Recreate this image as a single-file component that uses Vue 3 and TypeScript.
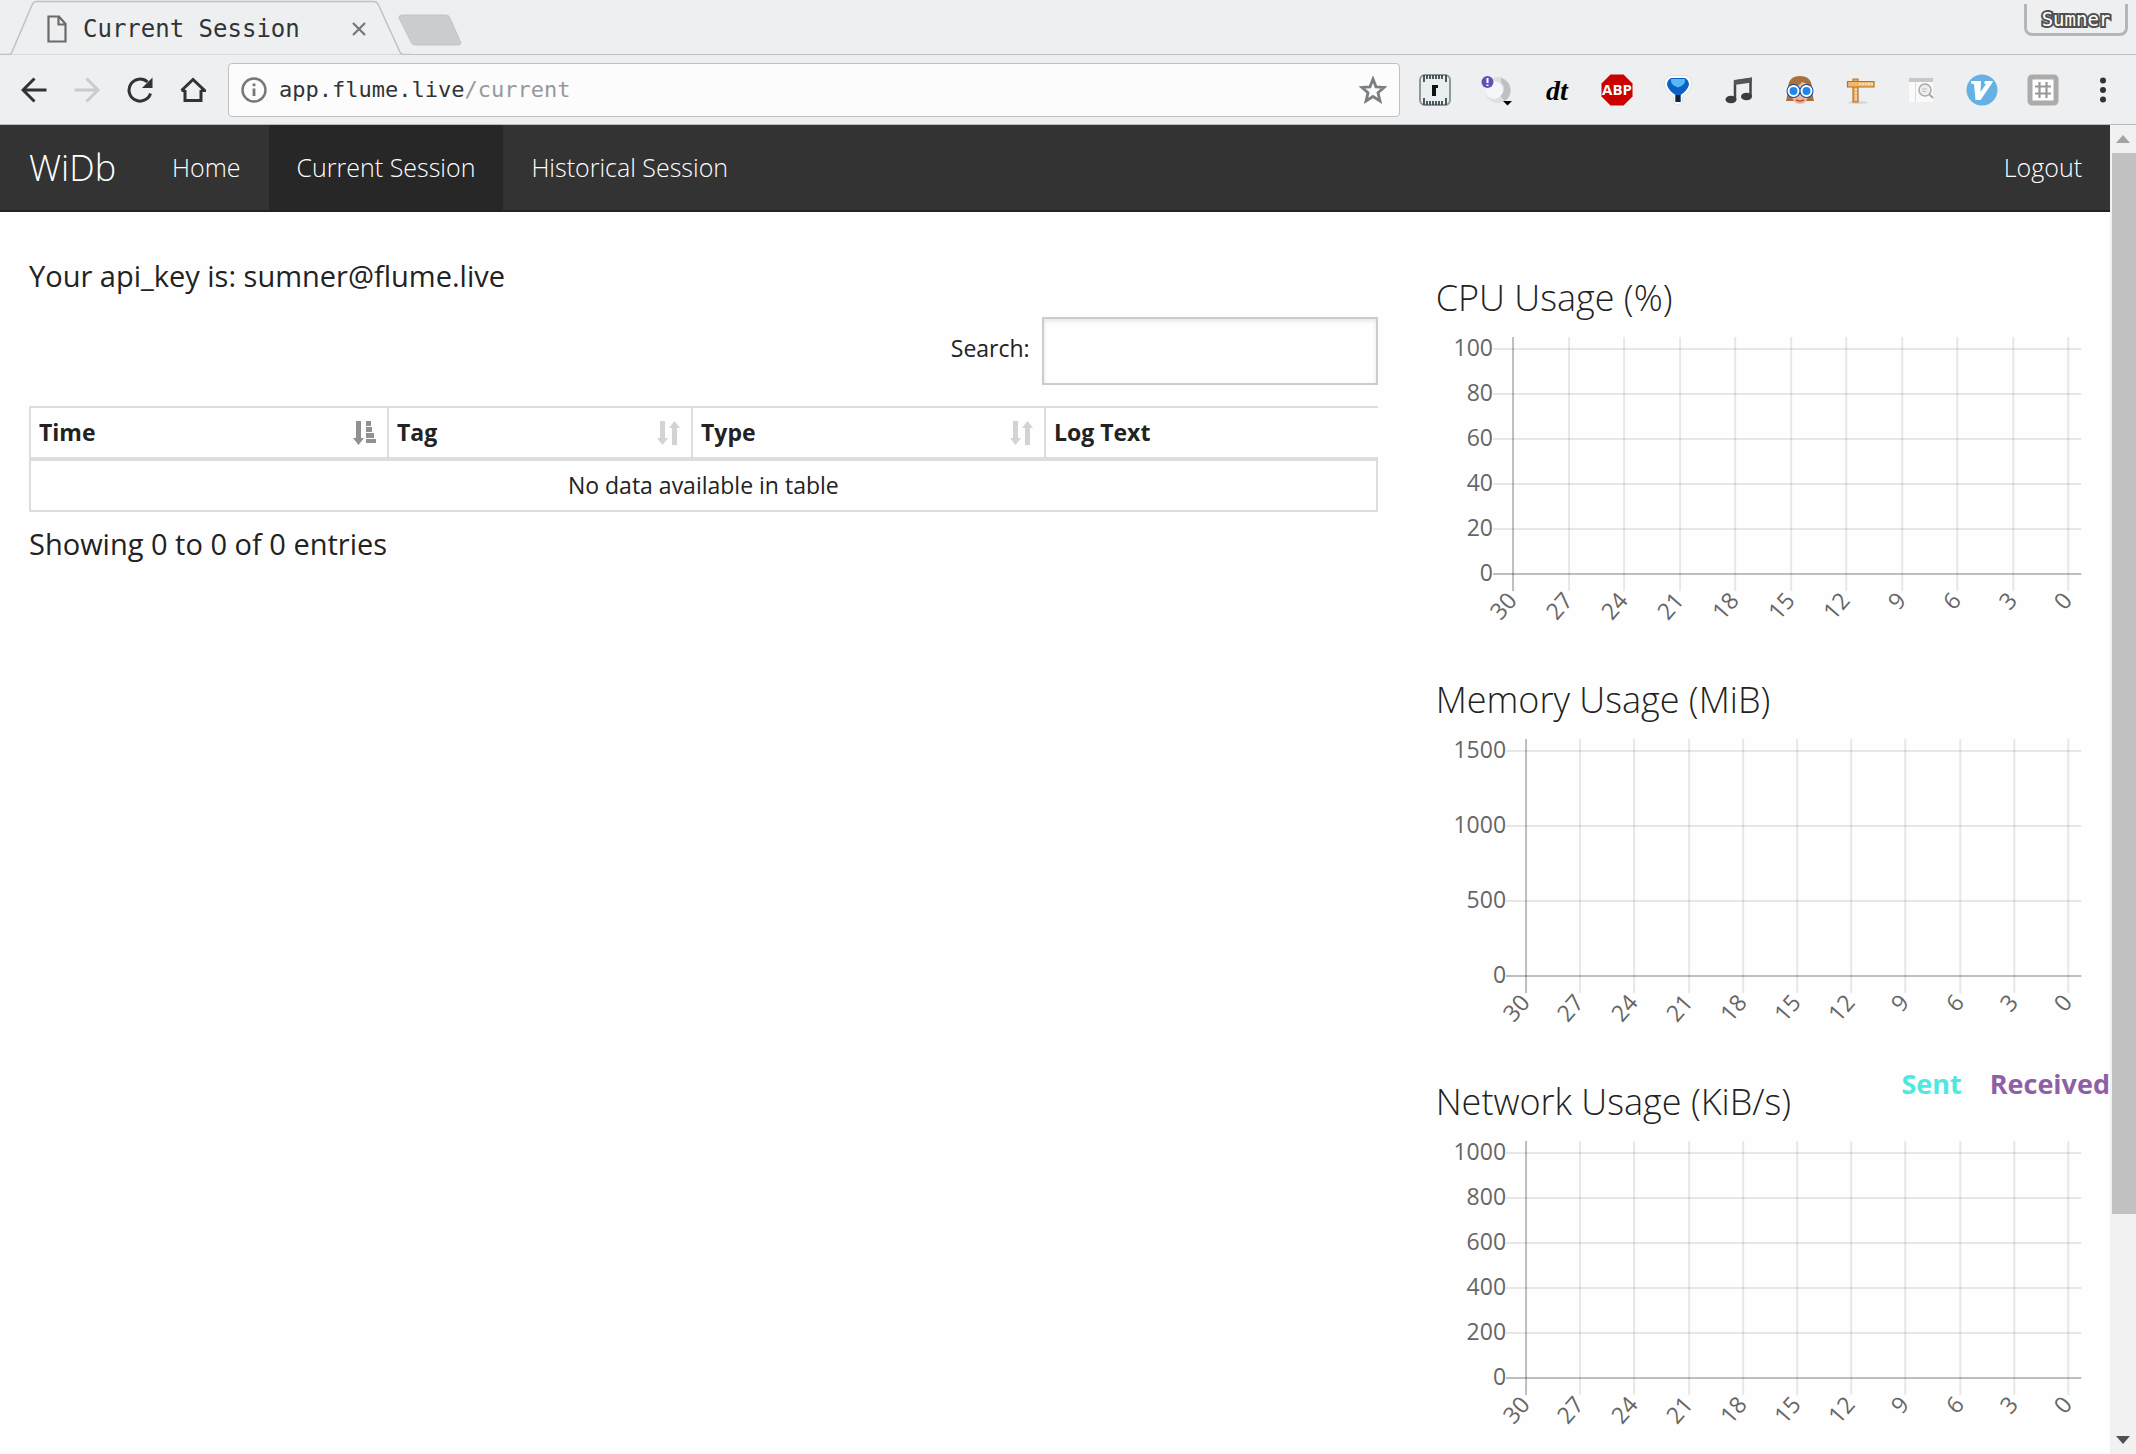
<script setup lang="ts">
interface Tick {
  label: string
  at: number
}

interface Chart {
  title: string
  axis: number
  rows: Tick[]
  cols: Tick[]
  legend: { label: string; tone: string }[]
}

const seconds = [30, 27, 24, 21, 18, 15, 12, 9, 6, 3, 0]

// Places the labels evenly between two ends, on whole units.
const spread = (labels: (string | number)[], from: number, to: number): Tick[] =>
  labels.map((label, i) => ({
    label: String(label),
    at: Math.round(from + ((to - from) * i) / (labels.length - 1)),
  }))

const makeChart = (
  title: string,
  values: number[],
  axis: number,
  legend: Chart['legend'] = [],
): Chart => ({
  title,
  axis,
  rows: spread(values, 12, 237),
  cols: spread(seconds, axis, 632),
  legend,
})

const charts: Chart[] = [
  makeChart('CPU Usage (%)', [100, 80, 60, 40, 20, 0], 77),
  makeChart('Memory Usage (MiB)', [1500, 1000, 500, 0], 90),
  makeChart('Network Usage (KiB/s)', [1000, 800, 600, 400, 200, 0], 90, [
    { label: 'Sent', tone: 'sent' },
    { label: 'Received', tone: 'received' },
  ]),
]

const columns = [
  { label: 'Time', name: 'time', sort: 'asc' },
  { label: 'Tag', name: 'tag', sort: 'both' },
  { label: 'Type', name: 'type', sort: 'both' },
  { label: 'Log Text', name: 'log', sort: 'none' },
]
</script>

<template>
  <div class="window">
    <header class="chrome">
      <div class="tabs">
        <div class="tab">
          <svg class="tab-shape" width="413" height="55" viewBox="0 0 413 55" aria-hidden="true">
            <path d="M0 54.500H9Q11 54.500 12 52L32 5Q33.500 1.500 37 1.500H374Q377 1.500 378.500 5L400 52Q401 54.500 403 54.500H413" fill="#eeeff1" stroke="#bfc1c3" stroke-width="1.500" />
          </svg>
          <svg class="tab-icon" width="20" height="28" viewBox="0 0 20 28" aria-hidden="true">
            <path d="M1.500 1.500H12L18.500 9V26.500H1.500Z M11.500 2V9.500H18.500" fill="none" stroke="#6b6b6b" stroke-width="2.200" />
          </svg>
          <span class="tab-title">Current Session</span>
          <button class="tab-close" type="button" aria-label="Close tab">
            <svg width="14" height="14" viewBox="0 0 14 14"><path d="M1 1L13 13M13 1L1 13" stroke="#75777a" stroke-width="2.200" /></svg>
          </button>
        </div>
        <button class="new-tab" type="button" aria-label="New tab">
          <svg width="64" height="32" viewBox="0 0 64 32"><path d="M4 1H48Q51 1 52 4L63 29Q63 31 60 31H17Q14 31 13 28L1 4Q1 1 4 1Z" fill="#cbcccd" stroke="#c4c5c6" /></svg>
        </button>
        <button class="profile" type="button">Sumner</button>
      </div>

      <div class="toolbar">
        <nav class="controls" aria-label="Browser controls">
          <button type="button" aria-label="Back">
            <svg width="26" height="26" viewBox="0 0 26 26"><path d="M25.500 13H2.500M13.500 1.500L2 13L13.500 24.500" fill="none" stroke="#2f3437" stroke-width="3" /></svg>
          </button>
          <button type="button" aria-label="Forward" disabled>
            <svg width="26" height="26" viewBox="0 0 26 26"><path d="M0.500 13H23.500M12.500 1.500L24 13L12.500 24.500" fill="none" stroke="#cacbcd" stroke-width="3" /></svg>
          </button>
          <button type="button" aria-label="Reload">
            <svg width="26" height="26" viewBox="0 0 26 26"><path d="M23.500 16.500A11 11 0 1 1 20.500 5" fill="none" stroke="#2f3437" stroke-width="3" /><path d="M25.500 0.500V11H15Z" fill="#2f3437" /></svg>
          </button>
          <button type="button" aria-label="Home page">
            <svg width="26" height="26" viewBox="0 0 26 26"><path d="M5 13V23.500H21V13M1.500 13.500L13 2.500L24.500 13.500H21M5 13.500H1.500" fill="none" stroke="#2f3437" stroke-width="3" /></svg>
          </button>
        </nav>

        <div class="omnibox">
          <svg width="26" height="26" viewBox="0 0 26 26" aria-hidden="true">
            <circle cx="13" cy="13" r="11.500" fill="none" stroke="#75787b" stroke-width="2.400" />
            <path d="M13 11.500V19M13 6.500V9.300" stroke="#75787b" stroke-width="2.800" />
          </svg>
          <span class="url">app.flume.live<span class="path">/current</span></span>
          <svg class="star" width="28" height="28" viewBox="0 0 28 28" role="img" aria-label="Bookmark this page">
            <path d="M14 3L17 10.800L25.200 11.400L19 16.800L21 25L14 20.500L7 25L9 16.800L2.800 11.400L11 10.800Z" fill="none" stroke="#7b7e80" stroke-width="2.800" />
          </svg>
        </div>

        <div class="extensions">
          <svg width="32" height="32" viewBox="0 0 32 32" aria-hidden="true">
            <rect x="1" y="1" width="30" height="30" rx="5" fill="#e9eff1" stroke="#8e979b" stroke-width="2" />
            <path d="M5 1V8M8 1V5M11 1V5M14 1V5M17 1V5M20 1V5M23 1V5M27 1V8M5 31V24M8 31V27M11 31V27M14 31V27M17 31V27M20 31V27M23 31V27M27 31V24" stroke="#333e44" stroke-width="1.700" />
            <path d="M13 11H19V14H17V22H13Z" fill="#111" />
          </svg>
          <svg width="32" height="32" viewBox="0 0 32 32" aria-hidden="true">
            <circle cx="18" cy="16" r="13" fill="#dedfe1" />
            <path d="M21 4A13 13 0 0 1 25 27L20 22A9 9 0 0 0 21 8Z" fill="#bfc0c3" />
            <circle cx="14" cy="16" r="9" fill="#f6f6f8" />
            <circle cx="7.500" cy="8" r="6" fill="#5d55b5" />
            <path d="M7.500 4V9M7.500 10.500V12" stroke="#fff" stroke-width="2" />
            <path d="M23 27H32L27.500 31.500Z" fill="#000" />
          </svg>
          <svg width="32" height="32" viewBox="0 0 32 32" aria-hidden="true">
            <text class="dt" x="16" y="26" text-anchor="middle">dt</text>
          </svg>
          <svg width="32" height="32" viewBox="0 0 32 32" aria-hidden="true">
            <path d="M9.500 0.500H22.500L31.500 9.500V22.500L22.500 31.500H9.500L0.500 22.500V9.500Z" fill="#cb0000" />
            <text class="abp" x="16" y="21" text-anchor="middle">ABP</text>
          </svg>
          <svg width="32" height="32" viewBox="0 0 32 32" aria-hidden="true">
            <path d="M8 1.500H24Q30 4 30 11Q28 18 20.500 23V28Q19.500 31 16 31Q12 31 11.500 28V23Q4 18 2 11Q2 4 8 1.500Z" fill="#fdfdfd" stroke="#dfe0e2" />
            <path d="M9 4H23Q27 6 27 11Q25 17 18.500 21V28H13.500V21Q7 17 5 11Q5 6 9 4Z" fill="#0b62c4" />
            <path d="M9 5H23Q24 11 16 13.500Q8 11 9 5Z" fill="#58b8f5" />
            <path d="M13.500 21H18.500V28H13.500Z" fill="#12233c" />
          </svg>
          <svg width="32" height="32" viewBox="0 0 32 32" aria-hidden="true">
            <path d="M12 25V7.500L27.500 5V22" fill="none" stroke="#444" stroke-width="2.500" />
            <path d="M11 6L29 3.500V8.500L11 11Z" fill="#555" />
            <ellipse cx="8" cy="25.500" rx="5.500" ry="3.800" fill="#3c3c3c" />
            <ellipse cx="23.500" cy="22.500" rx="5.500" ry="3.800" fill="#3c3c3c" />
          </svg>
          <svg width="32" height="32" viewBox="0 0 32 32" aria-hidden="true">
            <path d="M2 27Q4 20 4 13Q5 2 16 2Q27 2 28 13Q28 20 30 27L22 27H10Z" fill="#a8703f" />
            <path d="M7 14Q14 13 18 8Q24 9 25 14V20Q23 30 16 30Q9 30 7 20Z" fill="#eeb694" />
            <circle cx="9.500" cy="17" r="7" fill="#0c479f" />
            <circle cx="22.500" cy="17" r="7" fill="#0c479f" />
            <circle cx="9.500" cy="17" r="5" fill="#1f86ef" stroke="#fff" stroke-width="2" />
            <circle cx="22.500" cy="17" r="5" fill="#1f86ef" stroke="#fff" stroke-width="2" />
            <path d="M12 26Q16 28 20 26" fill="none" stroke="#b8504a" stroke-width="1.500" />
          </svg>
          <svg width="32" height="32" viewBox="0 0 32 32" aria-hidden="true">
            <ellipse cx="13" cy="28.500" rx="10" ry="1.500" fill="#d4d5d7" />
            <path d="M8 5H13V28H8Z" fill="#edb066" stroke="#b8712c" stroke-width="1.200" />
            <path d="M2.500 7.500H29V13H2.500Z" fill="#f0b970" stroke="#b8712c" stroke-width="1.200" />
            <path d="M15 9V11M18 9V11M21 9V11M24 9V11M27 9V11M10 16H12M10 19H12M10 22H12M10 25H12" stroke="#fff" />
          </svg>
          <svg width="32" height="32" viewBox="0 0 32 32" aria-hidden="true">
            <rect x="4" y="4" width="24" height="24" fill="#fafafa" />
            <rect x="4" y="4" width="24" height="4" fill="#c8c8c8" />
            <path d="M10.500 8V28" stroke="#ddd" />
            <circle cx="20" cy="16" r="6" fill="#eee" stroke="#aaa" stroke-width="1.500" />
            <path d="M24 20L28 24" stroke="#aaa" stroke-width="2" />
            <path d="M17 15H22M17 17.500H21" stroke="#bbb" />
          </svg>
          <svg width="32" height="32" viewBox="0 0 32 32" aria-hidden="true">
            <circle cx="16" cy="16" r="15.500" fill="#66b1e4" />
            <path d="M5 7H15L14.500 18L20 10L18 9.500L19 7H27L25.500 10L14.500 26H9.500L8 10L5 9.500Z" fill="#fff" />
          </svg>
          <svg width="32" height="32" viewBox="0 0 32 32" aria-hidden="true">
            <rect x="3" y="3" width="26" height="26" rx="2" fill="#fff" stroke="#ababab" stroke-width="5" />
            <path d="M12.500 8V24M19.500 8V24M8 12.500H24M8 19.500H24" stroke="#999" stroke-width="2.200" />
          </svg>
        </div>

        <button class="menu" type="button" aria-label="Browser menu">
          <svg width="8" height="26" viewBox="0 0 8 26"><g fill="#2f3437"><circle cx="4" cy="3.500" r="3" /><circle cx="4" cy="13" r="3" /><circle cx="4" cy="22.500" r="3" /></g></svg>
        </button>
      </div>
    </header>

    <div class="viewport">
      <div class="page">
        <nav class="navbar">
          <a class="brand" href="#">WiDb</a>
          <a class="link" href="#">Home</a>
          <a class="link active" href="#" aria-current="page">Current Session</a>
          <a class="link" href="#">Historical Session</a>
          <a class="link logout" href="#">Logout</a>
        </nav>

        <main class="columns">
          <section class="logs">
            <p class="api-key">Your api_key is: sumner@flume.live</p>
            <div class="filter">
              <label for="log-search">Search:</label>
              <input id="log-search" type="search" />
            </div>
            <table>
              <thead>
                <tr>
                  <th v-for="c in columns" :key="c.name" scope="col" :class="c.name">
                    <span class="head">
                      {{ c.label }}
                      <svg v-if="c.sort === 'asc'" width="24" height="24" viewBox="0 0 24 24" aria-hidden="true">
                        <path d="M3 0H8V17H11L5.500 24L0 17H3ZM13 0H18V5H13ZM13 6H19V11H13ZM13 12H21V17H13ZM13 18H23V22H13Z" fill="#919191" />
                      </svg>
                      <svg v-else-if="c.sort === 'both'" width="24" height="24" viewBox="0 0 24 24" aria-hidden="true">
                        <path d="M3 0H8V17H11L5.500 24L0 17H3ZM15 24H20V7H23L17.500 0L12 7H15Z" fill="#d3d3d3" />
                      </svg>
                    </span>
                  </th>
                </tr>
              </thead>
              <tbody>
                <tr>
                  <td colspan="4">No data available in table</td>
                </tr>
              </tbody>
            </table>
            <p class="info">Showing 0 to 0 of 0 entries</p>
          </section>

          <aside class="charts">
            <section v-for="chart in charts" :key="chart.title" class="chart">
              <h2>{{ chart.title }}</h2>
              <div v-if="chart.legend.length" class="legend">
                <span v-for="l in chart.legend" :key="l.label" :class="l.tone">{{ l.label }}</span>
              </div>
              <svg class="plot" viewBox="0 0 645 294" role="img" :aria-label="chart.title">
                <g class="grid">
                  <line v-for="(r, i) in chart.rows" :key="'r' + r.label" :class="{ zero: i === chart.rows.length - 1 }" :x1="chart.axis - 20" x2="645" :y1="r.at" :y2="r.at" />
                  <line v-for="(c, i) in chart.cols" :key="'c' + c.label" :class="{ zero: i === 0 }" :x1="c.at" :x2="c.at" y1="0" y2="254" />
                </g>
                <text v-for="r in chart.rows" :key="'rt' + r.label" :x="chart.axis - 20" :y="r.at + 7" text-anchor="end">{{ r.label }}</text>
                <text v-for="c in chart.cols" :key="'ct' + c.label" :transform="`translate(${c.at - 1} 259) rotate(-49)`" y="8" text-anchor="end">{{ c.label }}</text>
              </svg>
            </section>
          </aside>
        </main>
      </div>

      <div class="scrollbar" aria-hidden="true">
        <svg width="14" height="8" viewBox="0 0 14 8"><path d="M0 8L7 0L14 8Z" fill="#a3a3a3" /></svg>
        <div class="track"><div class="thumb"></div></div>
        <svg width="14" height="8" viewBox="0 0 14 8"><path d="M0 0L7 8L14 0Z" fill="#505050" /></svg>
      </div>
    </div>
  </div>
</template>

<style>
body {
  margin: 0;
  background: #fefefe;
}
</style>

<style scoped>
.window {
  display: flex;
  flex-direction: column;
  height: 100vh;
  overflow: hidden;
  color: #222;
  font-family: "Open Sans", sans-serif;
}

.window * {
  box-sizing: border-box;
}

button {
  padding: 0;
  border: 0;
  background: none;
}

svg {
  display: block;
  flex: none;
}

/* Browser frame */
.chrome {
  background: #eeeff1;
  border-bottom: 1px solid #b9bbbd;
  font-family: "DejaVu Sans Mono", monospace;
  color: #2f3437;
}

.tabs {
  display: flex;
  height: 55px;
  box-shadow: inset 0 -1px #bfc1c3;
}

.tab {
  position: relative;
  display: flex;
  align-items: center;
  width: 398px;
  padding: 2px 32px 0 47px;
}

.tab-shape {
  position: absolute;
  top: 0;
  left: 0;
}

.tab-icon,
.tab-title,
.tab-close {
  position: relative;
}

.tab-title {
  flex: 1;
  margin-left: 16px;
  font-size: 24px;
  white-space: nowrap;
}

.new-tab {
  align-self: flex-start;
  margin-top: 14px;
}

.profile {
  align-self: flex-start;
  width: 104px;
  height: 32px;
  margin: 4px 8px 0 auto;
  border: 3px solid #b5b6b8;
  border-top: 0;
  border-radius: 0 0 8px 8px;
  color: #fff;
  font: 19px "DejaVu Sans Mono", monospace;
  -webkit-text-stroke: 4px #505050;
  paint-order: stroke fill;
}

.toolbar {
  display: flex;
  align-items: center;
  height: 69px;
  padding: 0 29px 0 21px;
}

.controls {
  display: flex;
  gap: 27px;
}

.omnibox {
  display: flex;
  flex: 1;
  align-items: center;
  height: 54px;
  margin: 0 19px 0 22px;
  padding: 0 12px;
  background: #fcfcfc;
  border: 1px solid #bfc1c3;
  border-radius: 4px;
}

.url {
  flex: 1;
  margin-left: 12px;
  font-size: 22px;
}

.path {
  color: #94999d;
}

.extensions {
  display: flex;
  justify-content: space-between;
  width: 640px;
}

.dt {
  font: italic bold 28px "Liberation Serif", serif;
}

.abp {
  fill: #fff;
  font: bold 15px "Open Sans", sans-serif;
}

.menu {
  margin-left: 40px;
}

/* Web page */
.viewport {
  display: flex;
  flex: 1;
  min-height: 0;
}

.page {
  flex: 1;
  min-width: 0;
  overflow: hidden;
}

.navbar {
  display: flex;
  height: 87px;
  background: #333;
  border-bottom: 2px solid #222;
}

.navbar a {
  display: flex;
  align-items: center;
  padding: 0 29px;
  color: #fff;
  font-weight: 300;
  text-decoration: none;
}

.navbar .brand {
  padding-right: 28px;
  font-size: 36px;
}

.navbar .link {
  padding: 0 28px 2px;
  font-size: 25px;
}

.navbar .active {
  background: #272727;
}

.navbar .logout {
  margin-left: auto;
}

.columns {
  display: grid;
  grid-template-columns: 2fr 1fr;
}

.logs,
.charts {
  min-width: 0;
  padding: 0 29px;
}

p {
  margin: 0;
  font-size: 29px;
  line-height: 40px;
}

.api-key {
  padding-top: 44px;
}

.filter {
  display: flex;
  justify-content: flex-end;
  gap: 12px;
  margin-top: 21px;
  font-size: 23px;
  line-height: 62px;
}

.filter input {
  width: 336px;
  height: 68px;
  padding: 0 12px;
  background: #fefefe;
  border: 2px solid #ccc;
  border-radius: 0;
  box-shadow: inset 0 2px 4px rgba(0, 0, 0, 0.1);
  font: inherit;
}

table {
  width: 100%;
  margin-top: 21px;
  border-spacing: 0;
  table-layout: fixed;
  font-size: 23px;
  line-height: 33px;
}

th {
  padding: 8px 10px 8px 8px;
  border-top: 2px solid #ddd;
  border-bottom: 2px solid #ddd;
  border-left: 2px solid #ddd;
  text-align: left;
}

.time {
  width: 358px;
}

.tag {
  width: 304px;
}

.type {
  width: 353px;
}

.head {
  display: flex;
  align-items: center;
  justify-content: space-between;
}

td {
  padding: 8px;
  border: 2px solid #ddd;
  text-align: center;
}

.info {
  margin-top: 12px;
}

.charts {
  padding-top: 60px;
}

.chart {
  position: relative;
  padding-bottom: 43px;
}

h2 {
  margin: 0 0 13px;
  font-size: 36px;
  font-weight: 300;
  line-height: 52px;
}

.plot {
  width: 100%;
  overflow: visible;
}

.plot line {
  stroke: rgba(0, 0, 0, 0.09);
  stroke-width: 2;
}

.plot line.zero {
  stroke: rgba(0, 0, 0, 0.25);
}

.plot text {
  fill: #666;
  font-size: 23px;
}

.legend {
  position: absolute;
  top: -12px;
  right: -29px;
  display: flex;
  gap: 28px;
  font-size: 27px;
  font-weight: 700;
  line-height: 40px;
}

.sent {
  color: #4de8e0;
}

.received {
  color: #8e5ea6;
}

.scrollbar {
  display: flex;
  flex-direction: column;
  align-items: center;
  gap: 10px;
  width: 26px;
  padding: 10px 0;
  background: #f1f1f1;
}

.track {
  display: flex;
  flex: 1;
  flex-direction: column;
  align-self: stretch;
  padding-left: 2px;
}

.track::after {
  flex: 1;
  content: "";
}

.thumb {
  flex: 5;
  background: #c1c1c1;
}
</style>
